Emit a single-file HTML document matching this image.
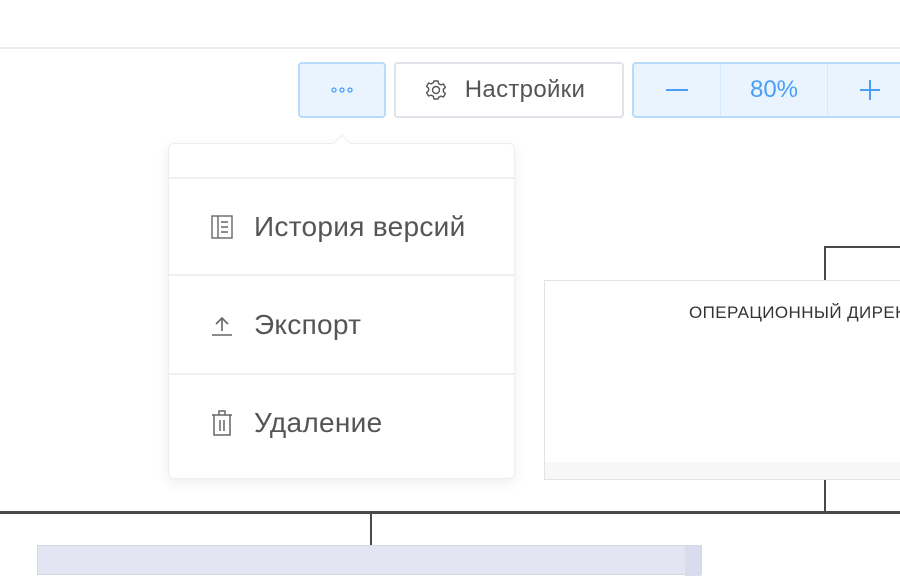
<!DOCTYPE html>
<html><head><meta charset="utf-8"><style>
*{box-sizing:border-box;margin:0;padding:0}
body{width:900px;height:568px;overflow:hidden;background:#fff;font-family:"Liberation Sans","DejaVu Sans",sans-serif;position:relative}
.abs{position:absolute}
.btn{position:absolute;top:62px;height:56px;border-radius:4px;display:flex;align-items:center;justify-content:center}
.item{position:absolute;left:0;width:347px;display:flex;align-items:center;font-size:28px;color:#555;letter-spacing:0.3px}
.item svg{position:absolute;left:42px}
.item span{position:absolute;left:85px}
.ln{position:absolute;background:#4a4a4a}
</style></head><body>
<div class="abs" style="left:0;top:47px;width:900px;height:2px;background:#e8eaee"></div>

<div class="btn" style="left:298px;width:88px;background:#eaf4ff;border:2px solid #b9dbfb">
<svg width="22" height="6"><circle cx="3" cy="3" r="2" fill="none" stroke="#4a9ff5" stroke-width="1.3"/><circle cx="11" cy="3" r="2" fill="none" stroke="#4a9ff5" stroke-width="1.3"/><circle cx="19" cy="3" r="2" fill="none" stroke="#4a9ff5" stroke-width="1.3"/></svg>
</div>
<div class="btn" style="left:394px;width:230px;border:2px solid #dfe2e8;color:#555;font-size:24px;letter-spacing:0.3px">
<svg width="22" height="22" viewBox="0 0 22 22" style="margin-right:18px;margin-left:-8px"><path d="M9 2h4l.6 2.6 2.3 1.3 2.5-.9 2 3.5-2 1.7v2.6l2 1.7-2 3.5-2.5-.9-2.3 1.3L13 20H9l-.6-2.6-2.3-1.3-2.5.9-2-3.5 2-1.7V9.2l-2-1.7 2-3.5 2.5.9 2.3-1.3z" fill="none" stroke="#555" stroke-width="1.4" stroke-linejoin="round"/><circle cx="11" cy="11" r="3.5" fill="none" stroke="#555" stroke-width="1.4"/></svg>Настройки</div>
<div class="btn" style="left:632px;width:290px;background:#eaf4ff;border:2px solid #b9dbfb;justify-content:flex-start;color:#4a9ff5;font-size:24px">
<div style="width:86px;height:52px;position:relative"><div class="abs" style="left:32px;top:25px;width:22px;height:2px;background:#4a9ff5"></div></div>
<div style="width:1px;height:52px;background:#d4e8fc"></div>
<div style="width:106px;text-align:center">80%</div>
<div style="width:1px;height:52px;background:#d4e8fc"></div>
<div style="width:86px;height:52px;position:relative"><div class="abs" style="left:32px;top:25px;width:20px;height:2px;background:#4a9ff5"></div><div class="abs" style="left:41px;top:16px;width:2px;height:20px;background:#4a9ff5"></div></div>
</div>

<!-- org chart -->
<div class="ln" style="left:0;top:511px;width:900px;height:3px"></div>
<div class="ln" style="left:370px;top:512px;width:2px;height:34px"></div>
<div class="ln" style="left:824px;top:246px;width:2px;height:266px"></div>
<div class="ln" style="left:824px;top:246px;width:76px;height:2px"></div>
<div class="abs" style="left:544px;top:280px;width:360px;height:200px;background:#fff;border:1px solid #e2e2e2"></div>
<div class="abs" style="left:545px;top:462px;width:360px;height:17px;background:#f7f7f7"></div>
<div class="abs" style="left:689px;top:303px;font-size:17px;color:#333;white-space:nowrap;letter-spacing:0.4px">ОПЕРАЦИОННЫЙ ДИРЕКТОР</div>
<div class="abs" style="left:37px;top:545px;width:665px;height:30px;background:#e3e5f2;border:1px solid #d6d9e8"></div>
<div class="abs" style="left:685px;top:546px;width:16px;height:30px;background:#d9dcec"></div>

<!-- popup -->
<div class="abs" style="left:168px;top:143px;width:347px;height:336px;background:#fff;border:1px solid #eceef3;border-radius:6px;box-shadow:0 4px 14px rgba(0,0,0,0.07)">
<div class="abs" style="left:167px;top:-7px;width:12px;height:12px;background:#fff;transform:rotate(45deg);border-left:1px solid #eceef3;border-top:1px solid #eceef3"></div>
<div class="abs" style="left:0;top:33px;width:346px;height:2px;background:#edf0f5"></div>
<div class="abs" style="left:0;top:130px;width:346px;height:2px;background:#edf0f5"></div>
<div class="abs" style="left:0;top:229px;width:346px;height:2px;background:#edf0f5"></div>
<div class="item" style="top:35px;height:95px">
<svg width="22" height="24" viewBox="0 0 22 24"><rect x="1" y="1" width="20" height="22" fill="none" stroke="#666" stroke-width="1.4"/><line x1="7" y1="1" x2="7" y2="23" stroke="#666" stroke-width="1.4"/><path d="M10 7h7M10 12h7M10 17h7" stroke="#666" stroke-width="1.4"/></svg>
<span>История версий</span></div>
<div class="item" style="top:132px;height:97px">
<svg width="22" height="24" viewBox="0 0 22 24"><path d="M11 18V5M5 11l6-6 6 6M1 22h20" fill="none" stroke="#666" stroke-width="1.6"/></svg>
<span>Экспорт</span></div>
<div class="item" style="top:231px;height:96px">
<svg width="22" height="26" viewBox="0 0 22 26"><path d="M1 5h20M8 5V1h6v4M3 5v20h16V5M9 10v11M13 10v11" fill="none" stroke="#666" stroke-width="1.5"/></svg>
<span>Удаление</span></div>
</div>
</body></html>
